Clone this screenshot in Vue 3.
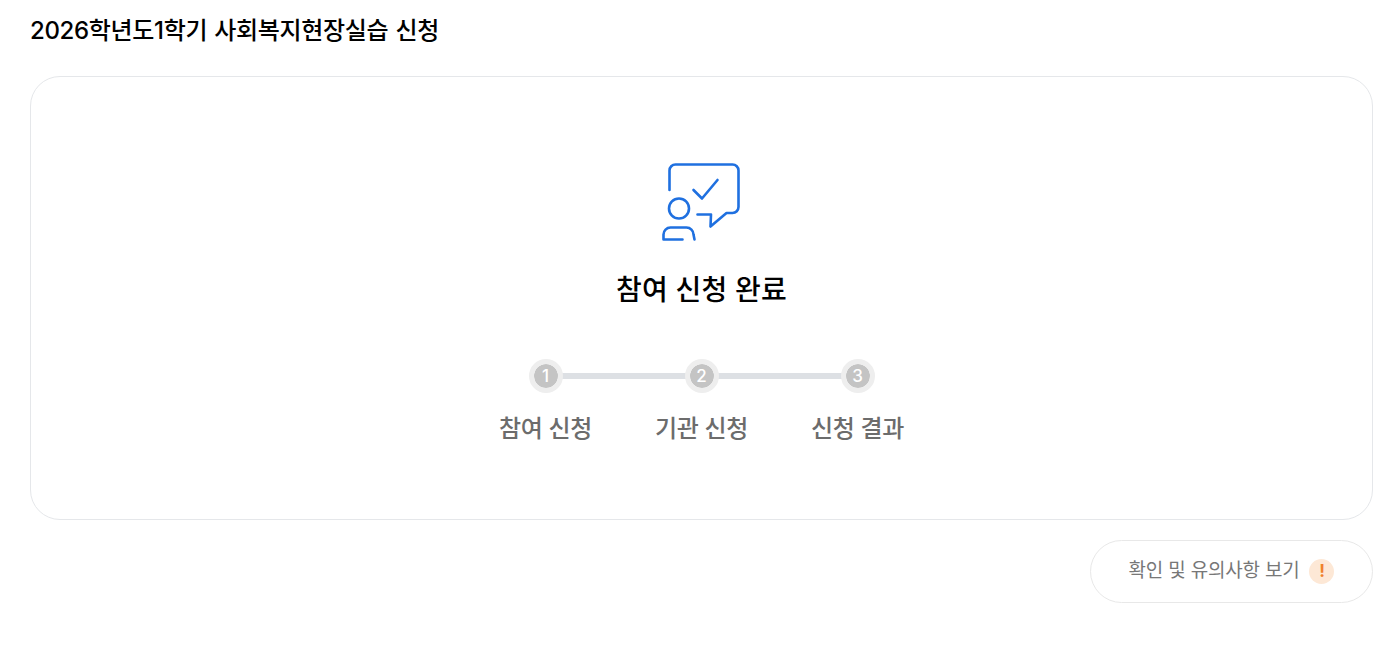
<script setup>
const steps = [
  { num: 1, label: '참여 신청' },
  { num: 2, label: '기관 신청' },
  { num: 3, label: '신청 결과' },
];
</script>

<template>
  <div class="page">
    <h1 class="page-title">2026학년도1학기 사회복지현장실습 신청</h1>

    <section class="status-card">
      <svg class="status-icon" width="84" height="84" viewBox="0 0 84 84" fill="none" stroke="#1f70e0" stroke-width="2.6" stroke-linecap="round" stroke-linejoin="round">
        <path d="M9.500 30V10.500a6 6 0 0 1 6-6H72.500a6 6 0 0 1 6 6V47a6 6 0 0 1-6 6h-6L50.500 66.500 51 54.500H37.500" />
        <path d="M33.500 30l8.500 8.500 15.500-18.500" />
        <circle cx="19" cy="48.500" r="10" />
        <path d="M3.500 79.500v-5a7 7 0 0 1 7-7h16a7 7 0 0 1 7 7l1 5M3.500 79.500H22.500" />
      </svg>

      <h2 class="status-title">참여 신청 완료</h2>

      <ol class="steps">
        <li v-for="step in steps" :key="step.num" class="step">
          <span class="step-num">{{ step.num }}</span>
          <span class="step-label">{{ step.label }}</span>
        </li>
      </ol>
    </section>

    <div class="actions">
      <button class="notice-btn" type="button">
        <span class="notice-text">확인 및 유의사항 보기</span>
        <span class="notice-mark">!</span>
      </button>
    </div>
  </div>
</template>

<style scoped>
.page {
  padding: 0 18px 0 30px;
  font-family: Inter, "Noto Sans CJK KR", sans-serif;
  color: #000;
}

.page-title {
  margin: 0;
  padding-top: 15px;
  height: 32px;
  font-size: 24px;
  line-height: 32px;
  font-weight: 500;
  letter-spacing: -0.33px;
  word-spacing: 1px;
}

.status-card {
  margin-top: 29px;
  height: 444px;
  box-sizing: border-box;
  border: 1px solid #e5e7ea;
  border-radius: 30px;
  padding-top: 83px;
  display: flex;
  flex-direction: column;
  align-items: center;
}

.status-icon {
  display: block;
}

.status-title {
  margin: 26px 0 0;
  font-size: 28px;
  line-height: 40px;
  font-weight: 500;
  letter-spacing: 0.2px;
}

.steps {
  list-style: none;
  margin: 49px 0 0;
  padding: 0;
  display: flex;
}

.step {
  position: relative;
  width: 156px;
  display: flex;
  flex-direction: column;
  align-items: center;
}

.step:not(:last-child)::after {
  content: "";
  position: absolute;
  top: 14px;
  left: 78px;
  width: 156px;
  height: 6px;
  background: #dde0e4;
}

.step-num {
  position: relative;
  z-index: 1;
  box-sizing: border-box;
  width: 34px;
  height: 34px;
  border: 5px solid #eeeeee;
  border-radius: 50%;
  background: #c4c4c4;
  background-clip: padding-box;
  color: #fff;
  font-size: 17px;
  font-weight: 500;
  line-height: 24px;
  text-align: center;
}

.step-label {
  margin-top: 18px;
  font-size: 24px;
  line-height: 36px;
  font-weight: 500;
  color: #6c6c6c;
  letter-spacing: -0.35px;
}

.actions {
  display: flex;
  justify-content: flex-end;
  margin-top: 20px;
}

.notice-btn {
  box-sizing: border-box;
  width: 283px;
  height: 63px;
  border: 1px solid #e8e8e8;
  border-radius: 32px;
  background: #fff;
  font-family: inherit;
  font-size: 19px;
  line-height: 25px;
  color: #777;
  letter-spacing: -0.2px;
  display: flex;
  align-items: center;
  justify-content: center;
  gap: 10px;
}

.notice-text {
  position: relative;
  top: -1px;
}

.notice-mark {
  width: 25px;
  height: 25px;
  border-radius: 50%;
  background: #fde8d6;
  color: #f0812c;
  font-size: 17px;
  font-weight: 700;
  line-height: 25px;
  text-align: center;
}
</style>
